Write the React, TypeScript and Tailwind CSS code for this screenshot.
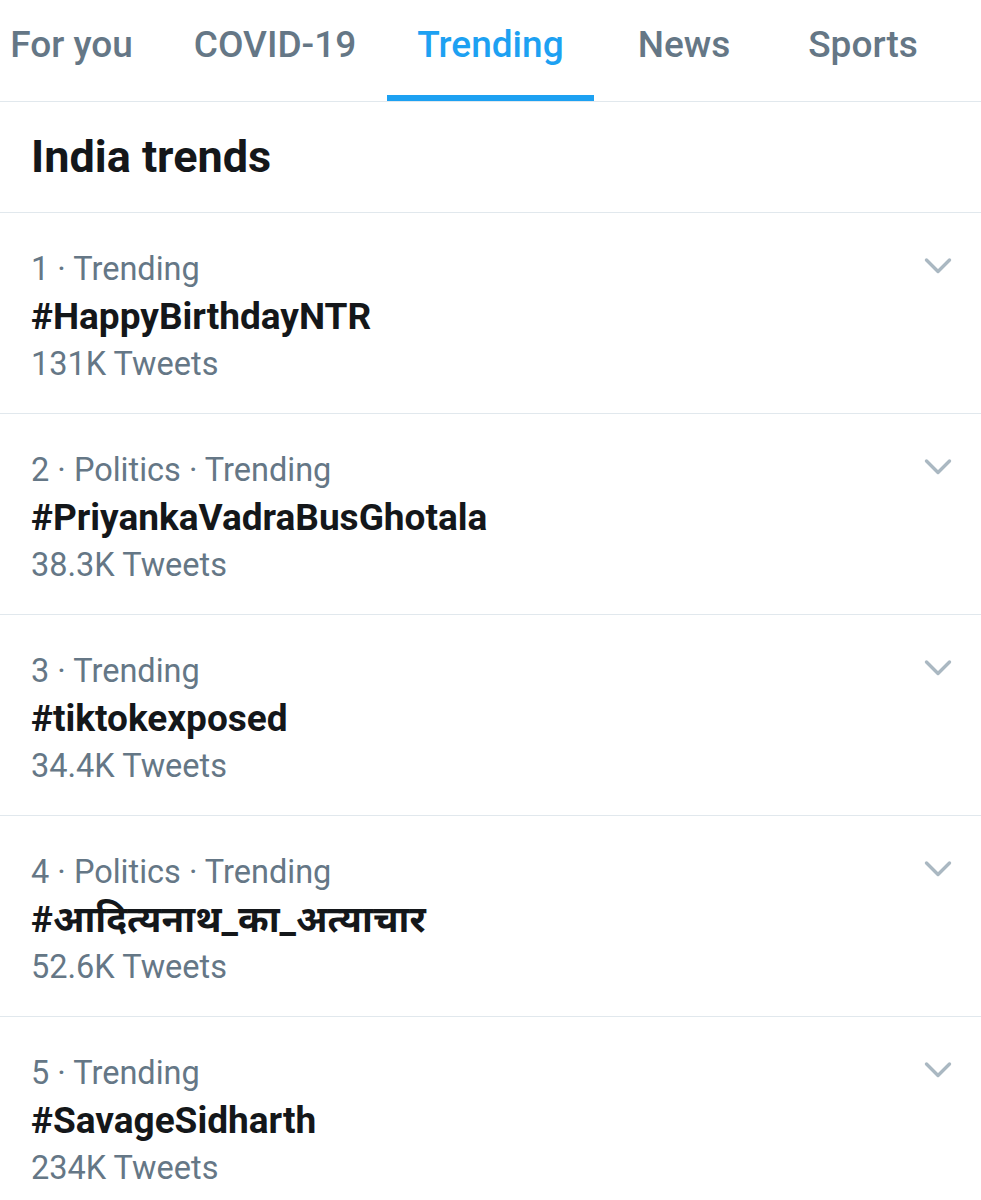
import React from 'react';

const TABS: { label: string; width: string; active?: boolean }[] = [
  { label: 'For you', width: 'w-[183px]' },
  { label: 'COVID-19', width: 'w-[224px]' },
  { label: 'Trending', width: 'w-[207px]', active: true },
  { label: 'News', width: 'w-[180px]' },
  { label: 'Sports', width: 'w-[178px]' },
];

const TRENDS = [
  { meta: '1 · Trending', tag: '#HappyBirthdayNTR', count: '131K Tweets' },
  { meta: '2 · Politics · Trending', tag: '#PriyankaVadraBusGhotala', count: '38.3K Tweets' },
  { meta: '3 · Trending', tag: '#tiktokexposed', count: '34.4K Tweets' },
  { meta: '4 · Politics · Trending', tag: '#आदित्यनाथ_का_अत्याचार', count: '52.6K Tweets' },
  { meta: '5 · Trending', tag: '#SavageSidharth', count: '234K Tweets' },
];

function Chevron() {
  return (
    <svg width="28" height="18" viewBox="0 0 28 18" className="mt-[11px] shrink-0" aria-hidden="true">
      <polyline
        points="2.5,3 14,14.5 25.5,3"
        fill="none"
        stroke="#aab8c2"
        strokeWidth="3.4"
        strokeLinecap="round"
        strokeLinejoin="round"
      />
    </svg>
  );
}

export default function App() {
  return (
    <div className="w-[981px] h-[1200px] overflow-hidden bg-white font-['Roboto','Noto_Sans',sans-serif]">
      {/* Tabs */}
      <div className="flex border-b border-[#e1e8ed] overflow-hidden">
        <div className="flex -ml-5 shrink-0">
          {TABS.map((t) => (
            <div
              key={t.label}
              className={`${t.width} h-[101px] shrink-0 flex justify-center pt-[23px] border-b-[6px] ${
                t.active ? 'border-[#1da1f2] text-[#1da1f2]' : 'border-transparent text-[#657786]'
              }`}
            >
              <span className="text-[37px] leading-[44px] font-medium whitespace-nowrap">{t.label}</span>
            </div>
          ))}
        </div>
      </div>

      {/* Header */}
      <div className="px-[31px] pt-[27px] pb-[27px] border-b border-[#e1e8ed]">
        <h1 className="text-[45px] leading-[56px] font-bold text-[#14171a]">India trends</h1>
      </div>

      {/* Trends */}
      {TRENDS.map((t) => (
        <div
          key={t.tag}
          className="flex justify-between pl-[31px] pr-[29px] pt-[33px] pb-[27px] border-b border-[#e1e8ed]"
        >
          <div className="flex flex-col">
            <span className="text-[32.5px] leading-[46px] text-[#657786]">{t.meta}</span>
            <span className="text-[37px] leading-[50px] font-bold text-[#14171a]">{t.tag}</span>
            <span className="text-[32.5px] leading-[44px] text-[#657786]">{t.count}</span>
          </div>
          <Chevron />
        </div>
      ))}
    </div>
  );
}
